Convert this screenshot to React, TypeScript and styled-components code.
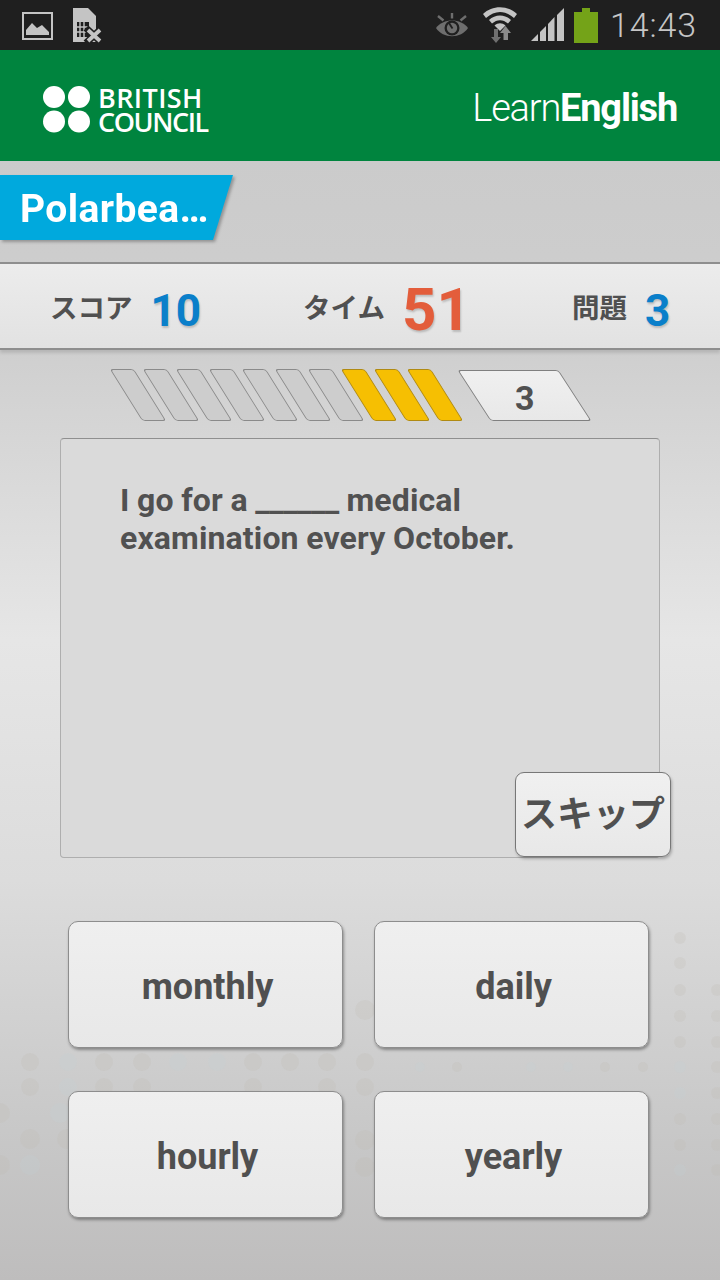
import React from "react";
import styled, { createGlobalStyle } from "styled-components";

const Global = createGlobalStyle`
  html, body { margin: 0; padding: 0; }
  body { width: 720px; height: 1280px; overflow: hidden; font-family: Roboto, "Noto Sans CJK JP", sans-serif; }
`;

const Screen = styled.div`
  position: relative;
  width: 720px;
  height: 1280px;
  overflow: hidden;
  display: flex;
  flex-direction: column;
  background: linear-gradient(180deg, #cbcbcb 160px, #cfcfcf 350px, #e6e6e6 640px, #dcdcdc 880px, #c8c8c8 1130px, #bebdbd 1280px);
`;

const Decor = styled.svg`
  position: absolute;
  left: 0;
  top: 0;
  width: 720px;
  height: 1280px;
  pointer-events: none;
`;

const GhostText = styled.text`
  font-family: "Liberation Sans", sans-serif;
  font-size: 34px;
  fill: #000;
  fill-opacity: 0.025;
`;

const StatusBar = styled.div`
  height: 50px;
  flex: none;
  background: #1f1f1f;
  display: flex;
  align-items: center;
  justify-content: space-between;
  padding: 0 23px 0 22px;
  box-sizing: border-box;
  position: relative;
`;

const StatusGroup = styled.div`
  display: flex;
  align-items: center;
`;

const Clock = styled.span`
  font-family: Roboto, sans-serif;
  font-size: 34px;
  font-weight: 300;
  color: #c6c6c6;
  margin-left: 12px;
  line-height: 50px;
  letter-spacing: 0.9px;
`;

const Header = styled.header`
  height: 111px;
  flex: none;
  background: #00843e;
  display: flex;
  align-items: center;
  justify-content: space-between;
  padding: 8px 43px 0;
  box-sizing: border-box;
  position: relative;
`;

const Brand = styled.div`
  display: flex;
  align-items: center;
  gap: 7px;
`;

const BrandName = styled.div`
  font-family: "Open Sans", sans-serif;
  font-weight: 600;
  font-size: 27px;
  line-height: 24px;
  color: #fff;
`;

const BrandLine = styled.div<{ $spacing: number }>`
  letter-spacing: ${(p) => p.$spacing}px;
`;

const LearnLogo = styled.div`
  font-family: Roboto, sans-serif;
  font-size: 38px;
  color: #fff;
  font-weight: 300;
  letter-spacing: -1.2px;
  padding-bottom: 4px;
`;

const LearnBold = styled.span`
  font-weight: 700;
`;

const TabRow = styled.div`
  height: 101px;
  flex: none;
  padding-top: 14px;
  box-sizing: border-box;
  position: relative;
`;

const TabShadow = styled.div`
  width: 233px;
  filter: drop-shadow(2px 2px 1.5px rgba(0, 0, 0, 0.28));
`;

const Tab = styled.div`
  height: 65px;
  background: #00a9dd;
  clip-path: polygon(0 0, 100% 0, 213px 100%, 0 100%);
  color: #fff;
  font-family: Roboto, sans-serif;
  font-weight: 700;
  font-size: 39px;
  line-height: 69px;
  padding-left: 20px;
  letter-spacing: 0.4px;
`;

const ScoreBar = styled.div`
  height: 88px;
  flex: none;
  box-sizing: border-box;
  border-top: 2px solid #8e8e8e;
  border-bottom: 2px solid #8e8e8e;
  background: linear-gradient(180deg, #ececec, #e2e2e2);
  box-shadow: 0 3px 3px rgba(0, 0, 0, 0.12);
  display: grid;
  grid-template-columns: 253px 269px 1fr;
  align-items: center;
  padding-left: 50px;
  position: relative;
`;

const Stat = styled.div`
  display: flex;
  align-items: center;
  white-space: nowrap;
`;

const StatLabel = styled.span`
  font-family: "Noto Sans CJK JP", sans-serif;
  font-weight: 700;
  font-size: 27.5px;
  color: #505050;
  line-height: 40px;
`;

const StatValue = styled.span<{ $big?: boolean }>`
  font-family: Roboto, sans-serif;
  font-weight: 700;
  font-size: ${(p) => (p.$big ? 60 : 44)}px;
  color: ${(p) => (p.$big ? "#e35d3b" : "#0a7fca")};
  margin-left: ${(p) => (p.$big ? 17 : 18)}px;
  margin-top: ${(p) => (p.$big ? 7 : 9)}px;
  text-shadow: 1px 2px 2px rgba(0, 0, 0, 0.18);
  line-height: 60px;
`;

const Progress = styled.div`
  height: 51px;
  flex: none;
  margin-top: 20px;
  padding-left: 126px;
  display: flex;
  box-sizing: border-box;
`;

const Segment = styled.div<{ $on?: boolean }>`
  width: 22px;
  height: 50px;
  margin-right: 9px;
  box-sizing: content-box;
  border: 1px solid ${(p) => (p.$on ? "#b08a12" : "#8a8a8a")};
  margin-top: -1px;
  border-radius: 3px;
  background: ${(p) => (p.$on ? "#f6bf02" : "#cdcdcd")};
  transform: skewX(32deg);
`;

const Counter = styled.div`
  width: 99px;
  height: 49px;
  margin-left: 18px;
  box-sizing: content-box;
  border: 1px solid #808080;
  border-radius: 3px;
  background: linear-gradient(180deg, #f0f0f0, #e8e8e8);
  transform: skewX(33deg);
  display: flex;
  align-items: center;
  justify-content: center;
`;

const CounterText = styled.span`
  display: block;
  transform: skewX(-33deg);
  font-family: Roboto, sans-serif;
  font-weight: 700;
  font-size: 34px;
  color: #505050;
  padding-top: 5px;
`;

const QuestionCard = styled.div`
  position: relative;
  margin: 17px 60px 0;
  height: 420px;
  flex: none;
  box-sizing: border-box;
  border: 1px solid #aeaeae;
  border-top-color: #8f8f8f;
  border-radius: 4px;
  background: #dadada;
  padding: 42px 59px;
`;

const QuestionText = styled.p`
  margin: 0;
  font-family: Roboto, sans-serif;
  font-weight: 700;
  font-size: 32px;
  line-height: 38px;
  letter-spacing: 0.13px;
  word-spacing: -0.5px;
  color: #515151;
`;

const Blank = styled.span`
  letter-spacing: -0.3px;
`;

const SkipButton = styled.button`
  position: absolute;
  right: -12px;
  bottom: 0;
  width: 156px;
  height: 85px;
  padding: 0 0 7px;
  box-sizing: border-box;
  border: 1px solid #777;
  border-radius: 9px;
  background: linear-gradient(180deg, #f0f0f0, #e8e8e8);
  box-shadow: 1px 2px 3px rgba(0, 0, 0, 0.25);
  font-family: "Noto Sans CJK JP", sans-serif;
  font-weight: 700;
  font-size: 36px;
  color: #505050;
  line-height: 1;
`;

const Answers = styled.div`
  margin: 63px 71px 0 68px;
  display: grid;
  grid-template-columns: 275px 275px;
  column-gap: 31px;
  row-gap: 43px;
  position: relative;
`;

const AnswerButton = styled.button`
  height: 127px;
  padding: 4px 0 0 4px;
  box-sizing: border-box;
  border: 1px solid #8d8d8d;
  border-radius: 10px;
  background: linear-gradient(180deg, #efefef, #e8e8e8);
  box-shadow: 1px 2px 3px rgba(0, 0, 0, 0.35);
  font-family: Roboto, sans-serif;
  font-weight: 700;
  font-size: 36px;
  color: #505050;
`;

const PictureIcon = () => (
  <svg width="32" height="29" viewBox="0 0 32 29" style={{ marginRight: 18 }}>
    <rect x="1" y="2" width="29" height="26" fill="none" stroke="#c4c4c4" strokeWidth="2" />
    <path d="M4 24 L4 19 L10 12 L15 17 L20 14 L27 21 L27 24 Z" fill="#c4c4c4" />
  </svg>
);

const SimIcon = () => (
  <svg width="30" height="36" viewBox="0 0 30 36">
    <path d="M1 1 H16 L24 9 V35 H1 Z" fill="#c4c4c4" />
    <path d="M5 15 H17 V30 H5 Z" fill="#1f1f1f" />
    <path d="M8 15 V30 M12 15 V30 M5 20 H17 M5 25 H17" stroke="#c4c4c4" strokeWidth="1.4" />
    <path d="M14 21 L30 36 M30 21 L14 36" stroke="#1f1f1f" strokeWidth="7" />
    <path d="M16 23 L28 34 M28 23 L16 34" stroke="#c4c4c4" strokeWidth="3.8" />
  </svg>
);

const EyeIcon = () => (
  <svg width="32" height="24" viewBox="0 0 32 24" style={{ marginRight: 15 }}>
    <path d="M0 15 C7 5 25 5 32 15 C25 26 7 26 0 15 Z" fill="#6e6e6e" />
    <circle cx="16" cy="15" r="7.5" fill="#1f1f1f" />
    <circle cx="16" cy="15" r="5.2" fill="#6e6e6e" />
    <path d="M16.5 15.5 L13 10" stroke="#1f1f1f" strokeWidth="1.8" />
    <path d="M16 0 V5.5 M2 3 L7.5 7.5 M30 3 L24.5 7.5" stroke="#6e6e6e" strokeWidth="2.4" />
  </svg>
);

const WifiIcon = () => (
  <svg width="34" height="36" viewBox="0 0 34 36" style={{ marginRight: 14 }}>
    <path d="M0 7 C9 -2 25 -2 34 7 L31 11 C22 3 12 3 3 11 Z" fill="#c4c4c4" />
    <path d="M6 13 C12 7 22 7 28 13 L25 16.5 C20 12 14 12 9 16.5 Z" fill="#c4c4c4" />
    <path d="M11.5 18.5 C15 15.5 19 15.5 22.5 18.5 L17 24 Z" fill="#c4c4c4" />
    <path d="M11 22 H15 V30 H18 L13 36 L8 30 H11 Z" fill="#6f6f6f" />
    <path d="M20.5 33 V26 H17 L22.5 19 L28 26 H25 V33 Z" fill="#8a8a8a" />
  </svg>
);

const SignalIcon = () => (
  <svg width="33" height="34" viewBox="0 0 33 34" style={{ marginRight: 10 }}>
    <path d="M0 33 L7 26 V33 Z" fill="#c4c4c4" />
    <path d="M9 33 V24 L15 18 V33 Z" fill="#c4c4c4" />
    <path d="M17 33 V16 L23.5 9 V33 Z" fill="#c4c4c4" />
    <path d="M26 33 V7 L33 0 V33 Z" fill="#c4c4c4" />
  </svg>
);

const BatteryIcon = () => (
  <svg width="24" height="35" viewBox="0 0 24 35">
    <path d="M8 0 H16 V4 H24 V35 H0 V4 H8 Z" fill="#74a318" />
  </svg>
);

const BrandMark = () => (
  <svg width="48" height="47" viewBox="0 0 48 47">
    <circle cx="11" cy="11" r="11" fill="#fff" />
    <circle cx="36" cy="11" r="11" fill="#fff" />
    <circle cx="11" cy="35.5" r="11" fill="#fff" />
    <circle cx="36" cy="35.5" r="11" fill="#fff" />
  </svg>
);

const BEIGE = "#bdb9b0";
const BLUE = "#c6d0d6";
const bgDots: [number, number, number, string][] = [];
[30, 68, 104, 142, 178, 217, 253, 290, 327, 365].forEach((x) => {
  bgDots.push([x, 1062, 9, x === 68 || x === 178 || x === 217 ? BLUE : BEIGE]);
});
[30, 68, 104, 142, 253, 327, 365].forEach((x) => {
  bgDots.push([x, 1087, 9, x === 68 ? BLUE : BEIGE]);
});
([
  [60, 1113, BLUE],
  [0, 1113, BEIGE],
  [30, 1139, BEIGE],
  [67, 1139, BEIGE],
  [0, 1165, BEIGE],
  [30, 1165, BLUE],
  [365, 1010, BEIGE],
  [365, 1140, BEIGE],
  [365, 1167, BEIGE],
] as [number, number, string][]).forEach(([x, y, c]) => bgDots.push([x, y, 10, c]));
[938, 963, 990, 1016, 1042, 1067, 1093, 1119, 1145, 1170].forEach((y, i) => {
  bgDots.push([680, y, 6, i === 5 || i === 6 || i === 9 ? BLUE : BEIGE]);
  if (i >= 2) bgDots.push([717, y, 6, BEIGE]);
});
[420, 531, 568].forEach((x) => bgDots.push([x, 1067, 5, BLUE]));
[457, 605, 643].forEach((x) => bgDots.push([x, 1067, 5, BEIGE]));

const segments = [false, false, false, false, false, false, false, true, true, true];

export default function App() {
  return (
    <Screen>
      <Global />
      <Decor viewBox="0 0 720 1280" aria-hidden="true">
        {bgDots.map(([x, y, r, c], i) => (
          <circle key={i} cx={x} cy={y} r={r} fill={c} opacity={0.22} />
        ))}
        <GhostText x="2" y="1212">m/2</GhostText>
        <GhostText x="652" y="1212">J P</GhostText>
      </Decor>
      <StatusBar>
        <StatusGroup>
          <PictureIcon />
          <SimIcon />
        </StatusGroup>
        <StatusGroup>
          <EyeIcon />
          <WifiIcon />
          <SignalIcon />
          <BatteryIcon />
          <Clock>14:43</Clock>
        </StatusGroup>
      </StatusBar>
      <Header>
        <Brand>
          <BrandMark />
          <BrandName>
            <BrandLine $spacing={0.4}>BRITISH</BrandLine>
            <BrandLine $spacing={-1.4}>COUNCIL</BrandLine>
          </BrandName>
        </Brand>
        <LearnLogo>
          Learn<LearnBold>English</LearnBold>
        </LearnLogo>
      </Header>
      <TabRow>
        <TabShadow>
          <Tab>Polarbea…</Tab>
        </TabShadow>
      </TabRow>
      <ScoreBar>
        <Stat>
          <StatLabel>スコア</StatLabel>
          <StatValue>10</StatValue>
        </Stat>
        <Stat>
          <StatLabel>タイム</StatLabel>
          <StatValue $big>51</StatValue>
        </Stat>
        <Stat>
          <StatLabel>問題</StatLabel>
          <StatValue>3</StatValue>
        </Stat>
      </ScoreBar>
      <Progress>
        {segments.map((on, i) => (
          <Segment key={i} $on={on} />
        ))}
        <Counter>
          <CounterText>3</CounterText>
        </Counter>
      </Progress>
      <QuestionCard>
        <QuestionText>
          I go for a <Blank>______</Blank> medical
          <br />
          examination every October.
        </QuestionText>
        <SkipButton>スキップ</SkipButton>
      </QuestionCard>
      <Answers>
        <AnswerButton>monthly</AnswerButton>
        <AnswerButton>daily</AnswerButton>
        <AnswerButton>hourly</AnswerButton>
        <AnswerButton>yearly</AnswerButton>
      </Answers>
    </Screen>
  );
}
